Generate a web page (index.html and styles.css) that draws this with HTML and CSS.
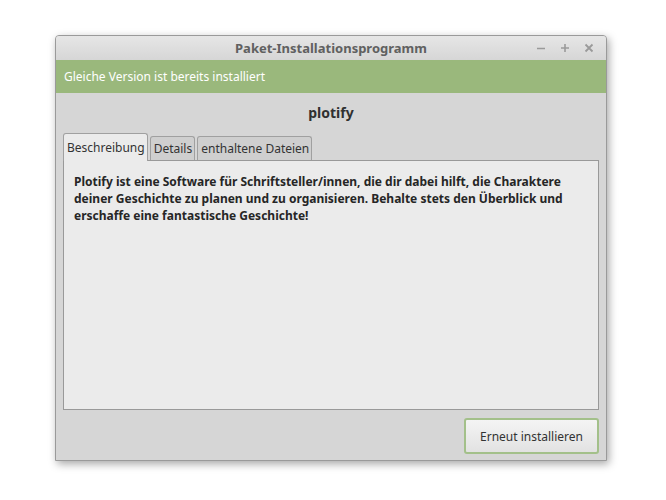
FILE: index.html
```html
<!DOCTYPE html>
<html>
<head>
<meta charset="utf-8">
<link rel="stylesheet" href="styles.css">
</head>
<body>
<div class="window">
  <div class="titlebar">
    <div class="title">Paket-Installationsprogramm</div>
    <div class="controls">
      <svg width="10" height="10" viewBox="0 0 10 10"><path d="M1 5.5h8" stroke="#9a9a9a" stroke-width="1.6"/></svg>
      <svg width="10" height="10" viewBox="0 0 10 10"><path d="M1 5h8M5 1v8" stroke="#9a9a9a" stroke-width="1.6"/></svg>
      <svg width="10" height="10" viewBox="0 0 10 10"><path d="M1.5 1.5l7 7M8.5 1.5l-7 7" stroke="#9a9a9a" stroke-width="1.8"/></svg>
    </div>
  </div>
  <div class="infobar">Gleiche Version ist bereits installiert</div>
  <div class="body">
    <div class="pkgname">plotify</div>
    <div class="tabs">
      <div class="tab active">Beschreibung</div>
      <div class="tab">Details</div>
      <div class="tab">enthaltene Dateien</div>
    </div>
    <div class="panel">
      <p class="desc">Plotify ist eine Software für Schriftsteller/innen, die dir dabei hilft, die Charaktere deiner Geschichte zu planen und zu organisieren. Behalte stets den Überblick und erschaffe eine fantastische Geschichte!</p>
    </div>
    <div class="actions">
      <button class="btn">Erneut installieren</button>
    </div>
  </div>
</div>
</body>
</html>
```
FILE: styles.css
```css
html, body {
  margin: 0;
  padding: 0;
  background: #ffffff;
  width: 666px;
  height: 500px;
  overflow: hidden;
}
body {
  font-family: "Noto Sans", "Open Sans", sans-serif;
  padding: 35px 0 0 55px;
  box-sizing: border-box;
}
.window {
  width: 550px;
  height: 424px;
  border: 1px solid #9a9a9a;
  border-radius: 4px 4px 0 0;
  background: #d6d6d6;
  box-shadow: 2px 3px 8px rgba(0,0,0,0.35);
  display: flex;
  flex-direction: column;
  overflow: hidden;
}
.titlebar {
  height: 24px;
  background: linear-gradient(#e6e6e6, #d6d6d6);
  display: flex;
  align-items: center;
  justify-content: center;
  position: relative;
}
.title {
  font-size: 13px;
  font-weight: bold;
  color: #606060;
}
.controls {
  position: absolute;
  right: 12px;
  top: 7px;
  display: flex;
  gap: 14px;
}
.controls svg { display: block; }
.infobar {
  height: 33px;
  background: #9ab87c;
  color: #ffffff;
  font-size: 12px;
  display: flex;
  align-items: center;
  padding-left: 8px;
}
.body {
  flex: 1;
  display: flex;
  flex-direction: column;
  padding: 0 7px 0 7px;
}
.pkgname {
  text-align: center;
  font-weight: bold;
  font-size: 14px;
  color: #303030;
  height: 40px;
  line-height: 40px;
}
.tabs {
  display: flex;
  align-items: flex-end;
  gap: 2px;
  height: 27px;
  position: relative;
  z-index: 1;
}
.tab {
  font-size: 12px;
  color: #333;
  background: #cfcfcf;
  border: 1px solid #a0a0a0;
  border-bottom: none;
  border-radius: 3px 3px 0 0;
  height: 24px;
  line-height: 24px;
  padding: 0 2px 0 3px;
  box-sizing: border-box;
}
.tab.active {
  background: #ebebeb;
  height: 28px;
  line-height: 28px;
  margin-bottom: -1px;
}
.panel {
  height: 250px;
  background: #ebebeb;
  border: 1px solid #999;
  box-sizing: border-box;
  padding: 12px 10px 0 10px;
}
.desc {
  margin: 0;
  font-size: 12px;
  font-weight: bold;
  line-height: 17px;
  color: #262626;
}
.actions {
  display: flex;
  justify-content: flex-end;
  padding-top: 8px;
}
.btn {
  font-family: "Noto Sans", "Open Sans", sans-serif;
  font-size: 12px;
  color: #333;
  width: 135px;
  height: 36px;
  border: 2px solid #a3c08a;
  border-radius: 3px;
  background: linear-gradient(#f4f4f4, #e2e2e2);
}
```
